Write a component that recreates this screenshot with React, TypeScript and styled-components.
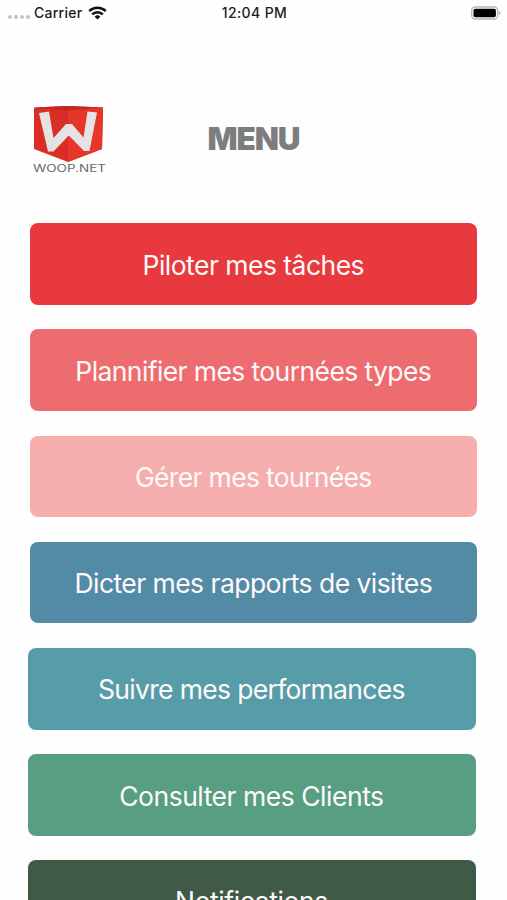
import React from "react";
import styled, { createGlobalStyle } from "styled-components";

const GlobalStyle = createGlobalStyle`
  * { box-sizing: border-box; }
  html, body { margin: 0; padding: 0; background: #fff; }
  body { overflow: hidden; font-family: Inter, "Liberation Sans", sans-serif; }
`;

const Screen = styled.div`
  display: flex;
  flex-direction: column;
  width: 507px;
  height: 900px;
  overflow: hidden;
  background: #fefefe;
`;

const StatusBar = styled.header`
  display: grid;
  grid-template-columns: 1fr auto 1fr;
  align-items: center;
  flex: none;
  height: 25px;
  padding: 0 6px 0 8px;
  color: #1b1b1b;
  font-size: 14px;
  font-weight: 500;
`;

const Network = styled.div`
  display: flex;
  align-items: center;
`;

const Signal = styled.div`
  display: flex;
  gap: 2px;
  margin: 8px 4px 0 0;
`;

const SignalDot = styled.span`
  width: 4px;
  height: 4px;
  border-radius: 50%;
  background: #c4c4c4;
`;

const Carrier = styled.span`
  margin-right: 6px;
  letter-spacing: 0.25px;
`;

const Clock = styled.time`
  letter-spacing: 0.4px;
`;

const Battery = styled.svg`
  justify-self: end;
`;

const Header = styled.div`
  display: grid;
  grid-template-columns: 80px 1fr 80px;
  align-items: start;
  flex: none;
  height: 198px;
  padding: 80px 29px 0;
`;

const Title = styled.h1`
  margin: 14px 0 0;
  color: #7d7d7d;
  font-size: 31.5px;
  font-weight: 900;
  letter-spacing: -1.1px;
  line-height: 40px;
  text-align: center;
`;

const Menu = styled.nav`
  display: flex;
  flex-direction: column;
  gap: 24.6px;
  padding: 0.3px 29.6px 0 30.2px;
`;

const MenuButton = styled.button<{ $color: string; $shift?: boolean; $spacing: number }>`
  flex: none;
  height: 81.6px;
  margin: 0 ${(p) => (p.$shift ? "1.6px 0 -2.2px" : "0")};
  padding: 1px 1px 0 0;
  border: 0;
  border-radius: 8px;
  background: ${(p) => p.$color};
  color: #fffafa;
  font-family: inherit;
  font-size: 26.5px;
  font-weight: 400;
  letter-spacing: ${(p) => p.$spacing}px;
  line-height: 34px;
  text-align: center;
  white-space: nowrap;

  &:last-child {
    margin-top: -0.6px;
  }
`;

const items = [
  { label: "Piloter mes tâches", color: "#e8393e", spacing: -0.53 },
  { label: "Plannifier mes tournées types", color: "#ed6c70", spacing: -0.6 },
  { label: "Gérer mes tournées", color: "#f5aead", spacing: -0.66 },
  { label: "Dicter mes rapports de visites", color: "#538ba6", spacing: -0.55 },
  { label: "Suivre mes performances", color: "#579da9", spacing: -0.66, shift: true },
  { label: "Consulter mes Clients", color: "#589e83", spacing: -0.48, shift: true },
  { label: "Notifications", color: "#405a48", spacing: -0.42, shift: true },
];

const WifiIcon = () => (
  <svg width="19" height="14" viewBox="0 0 19 14" fill="none" stroke="#111" strokeWidth="2.5">
    <path d="M1.200 5.100a11.800 11.800 0 0 1 16.600 0" />
    <path d="M4.200 8.400a7.500 7.500 0 0 1 10.600 0" />
    <path d="M9.500 13.600 6.600 10.700a4.200 4.200 0 0 1 5.800 0Z" fill="#111" stroke="none" />
  </svg>
);

const WoopLogo = () => (
  <svg width="80" height="72" viewBox="0 0 80 72">
    <path d="M5 2.500 39 1l35 1.500-1 41.500-34 13L5 44Z" fill="#d92d26" />
    <path d="M39 5l35-2.500-1 41.500-34 13Z" fill="#e6362a" />
    <path d="M5 2.500 39 1l35 1.500-35 3Z" fill="#c62721" />
    <path
      d="M10 8 20 6.500 24.500 33 37 19h6l11.500 13.500L58.500 6.500 68 7.500 60.500 46H55L39.800 30.500 24.500 46.500H19Z"
      fill="#e4e2e2"
    />
    <text
      x="4"
      y="66.500"
      fill="#696969"
      fontFamily="Inter, sans-serif"
      fontSize="9.800"
      fontWeight="400"
      textLength="73"
      lengthAdjust="spacingAndGlyphs"
    >
      WOOP.NET
    </text>
  </svg>
);

export default function App() {
  return (
    <>
      <GlobalStyle />
      <Screen>
        <StatusBar>
          <Network>
            <Signal>
              <SignalDot />
              <SignalDot />
              <SignalDot />
              <SignalDot />
            </Signal>
            <Carrier>Carrier</Carrier>
            <WifiIcon />
          </Network>
          <Clock>12:04 PM</Clock>
          <Battery width="31" height="16" viewBox="0 0 31 16">
            <rect x="1.700" y="2" width="26" height="12" rx="3.500" fill="#fff" stroke="#b5b5b5" strokeWidth="1.300" />
            <rect x="3.500" y="3.800" width="22.400" height="8.400" rx="1.800" fill="#000" />
            <path d="M29 6v4c1.800-.7 1.800-3.300 0-4Z" fill="#aaa" />
          </Battery>
        </StatusBar>
        <Header>
          <WoopLogo />
          <Title>MENU</Title>
        </Header>
        <Menu>
          {items.map((item) => (
            <MenuButton key={item.label} $color={item.color} $shift={item.shift} $spacing={item.spacing}>
              {item.label}
            </MenuButton>
          ))}
        </Menu>
      </Screen>
    </>
  );
}
